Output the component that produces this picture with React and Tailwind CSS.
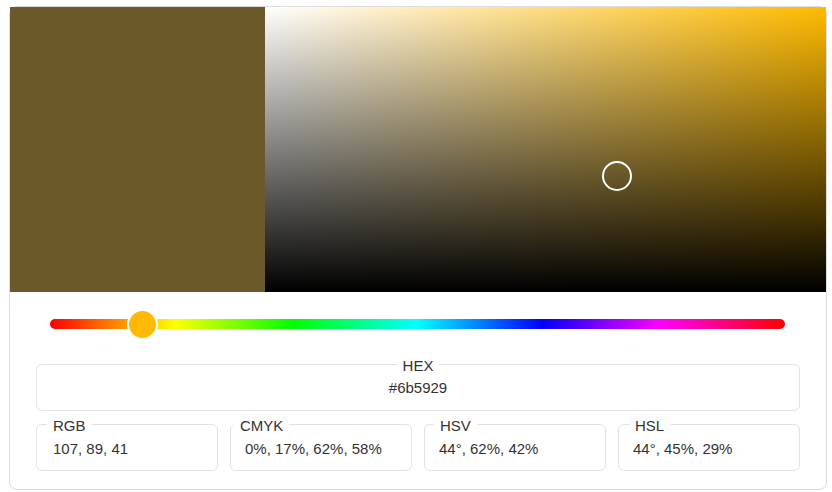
import React from 'react';

const font = { fontFamily: '"Liberation Sans", Arial, sans-serif' };

const fields = [
  { label: 'RGB', value: '107, 89, 41', ml: 'ml-[10px]', pl: 'pl-[16px]' },
  { label: 'CMYK', value: '0%, 17%, 62%, 58%', ml: 'ml-[3px]', pl: 'pl-[14px]' },
  { label: 'HSV', value: '44°, 62%, 42%', ml: 'ml-[9px]', pl: 'pl-[14px]' },
  { label: 'HSL', value: '44°, 45%, 29%', ml: 'ml-[10px]', pl: 'pl-[14px]' },
];

const Field = ({ label, value, ml, pl }) => (
  <fieldset className="m-0 p-0 min-w-0 border border-[#e2e2e2] rounded-md">
    <legend className={`${ml} px-[6px] pt-[3px] leading-[17px] text-[15px] text-[#333]`}>{label}</legend>
    <div className={`${pl} mt-[6px] mb-[13px] leading-[17px] text-[15px] text-[#333] whitespace-nowrap`}>{value}</div>
  </fieldset>
);

export default function App() {
  return (
    <div className="w-[832px] h-[492px] bg-white pt-[6px] pl-[9px]" style={font}>
      <div className="w-[818px] h-[484px] border border-[#dcdcdc] rounded-lg">
        <div className="flex h-[285px]">
          <div className="w-[255px] bg-[#6b5929]" />
          <div className="relative flex-1 bg-[#ffbb00]">
            <div className="absolute inset-0 bg-[linear-gradient(to_right,#ffffff,rgba(255,255,255,0))]" />
            <div className="absolute inset-0 bg-[linear-gradient(to_top,#000000,rgba(0,0,0,0))]" />
            <div className="absolute left-[337px] top-[154px] w-[30px] h-[30px] rounded-full border-2 border-white" />
          </div>
        </div>

        <div className="pt-[27px] pl-[40px] pr-[41px]">
          <div className="relative h-[10px] rounded-full bg-[linear-gradient(to_right,#ff0000_0%,#ffff00_17%,#00ff00_33%,#00ffff_50%,#0000ff_67%,#ff00ff_83%,#ff0000_100%)]">
            <div className="absolute left-[77px] top-[-10px] w-[31px] h-[31px] rounded-full border-2 border-white bg-[#ffb900]" />
          </div>
        </div>

        <div className="px-[26px] pt-[25px]">
          <fieldset className="m-0 p-0 min-w-0 border border-[#e2e2e2] rounded-md">
            <legend className="mx-auto px-[6px] pt-[3px] leading-[17px] text-[15px] text-[#333]">HEX</legend>
            <div className="mt-[5px] mb-[14px] text-center leading-[17px] text-[15px] text-[#333]">#6b5929</div>
          </fieldset>
          <div className="grid grid-cols-4 gap-[12px] mt-[3px]">
            {fields.map((f) => (
              <Field key={f.label} {...f} />
            ))}
          </div>
        </div>
      </div>
    </div>
  );
}
